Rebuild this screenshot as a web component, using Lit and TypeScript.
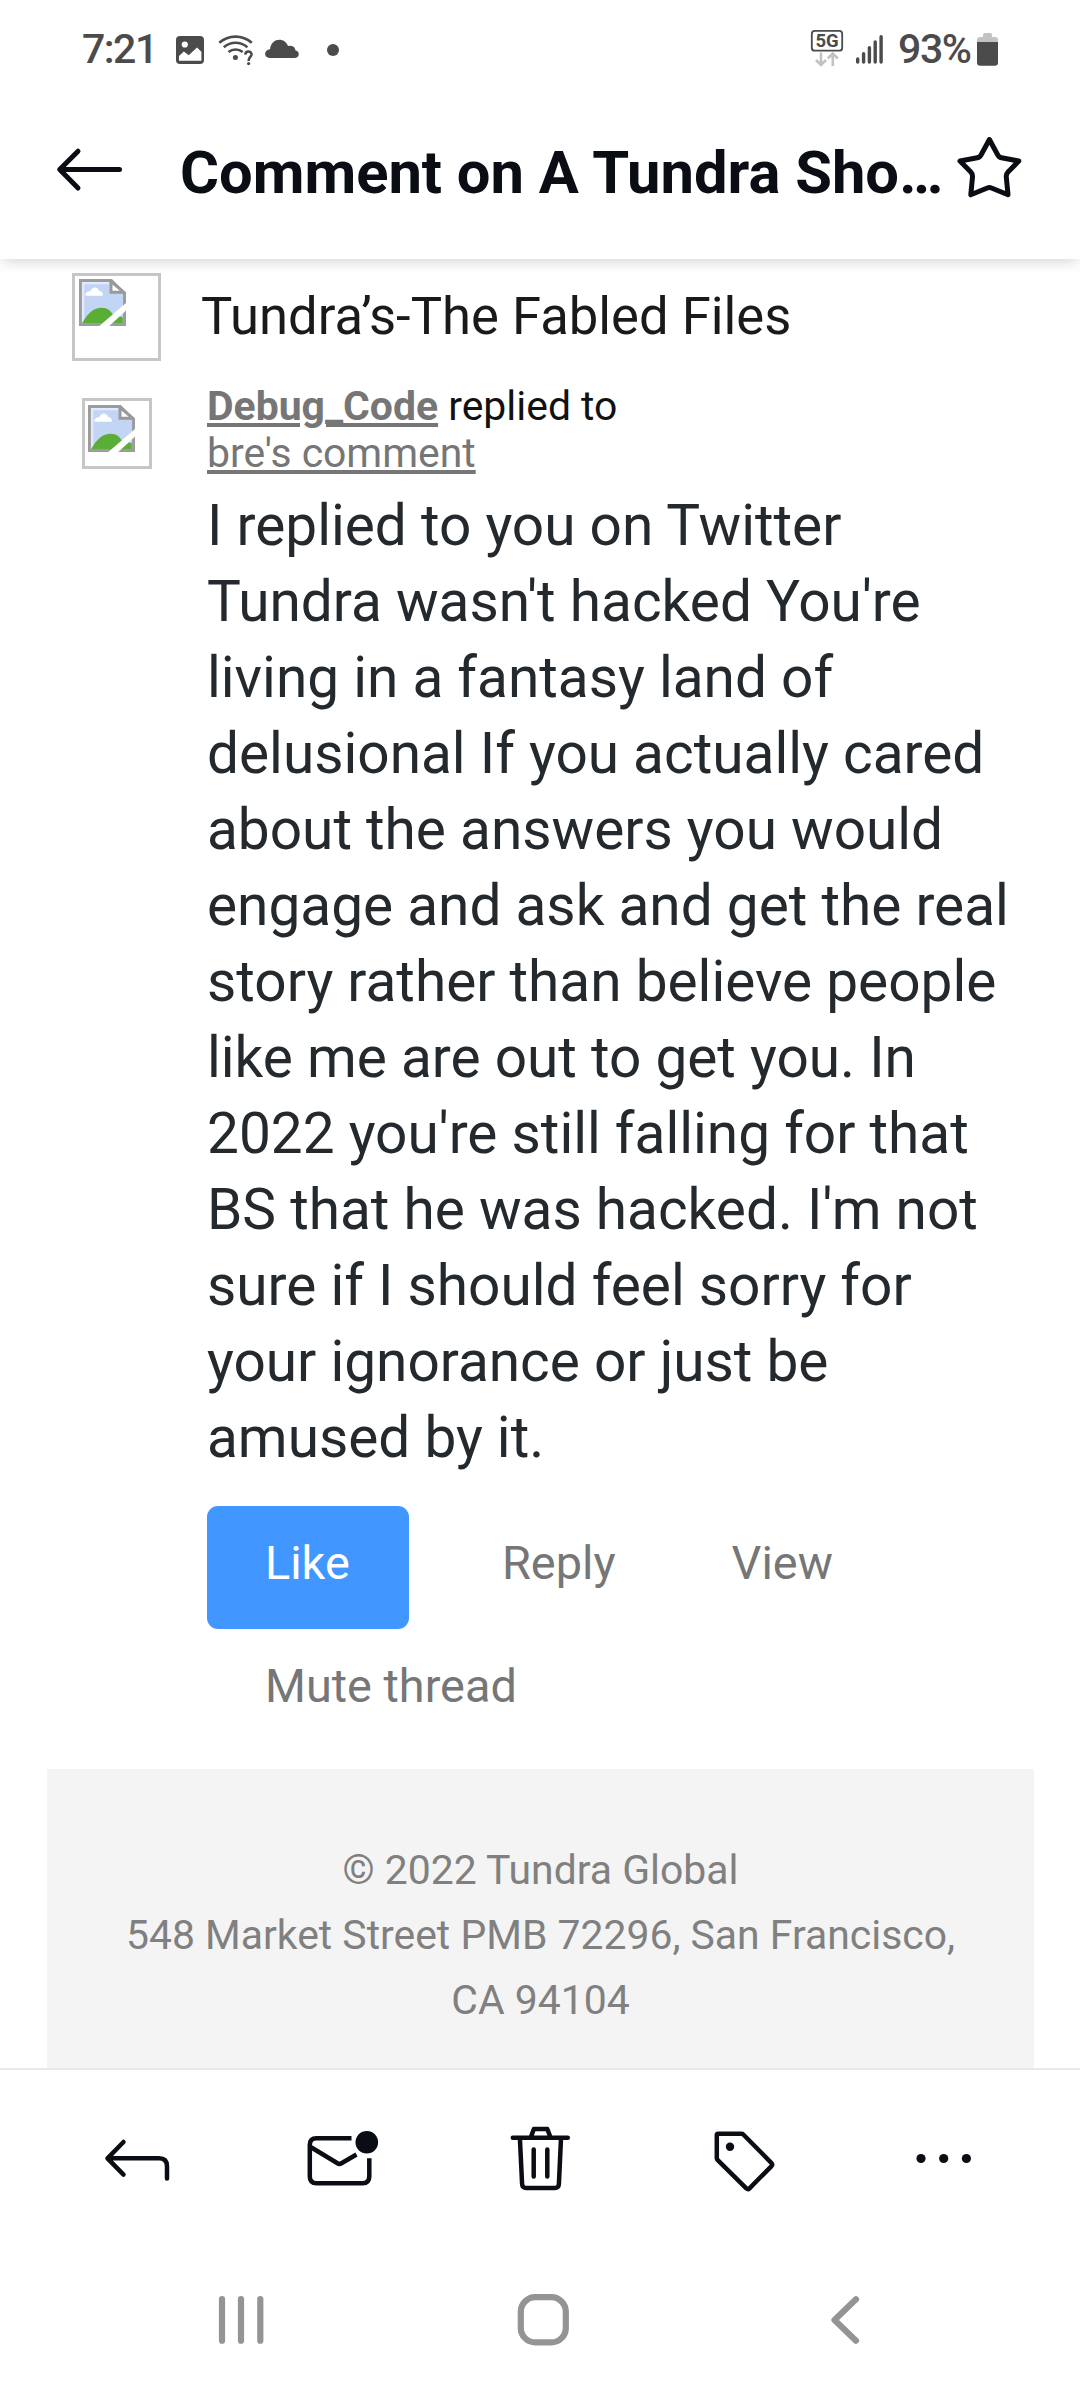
import { LitElement, html, css, svg } from "lit";
import { customElement, property } from "lit/decorators.js";

@customElement("broken-image")
class BrokenImage extends LitElement {
  static styles = css`
    :host { display: block; box-sizing: border-box; border: 3px solid #c6c6c6; flex: none; }
    svg { display: block; width: 47px; height: 47px; }
  `;
  render() {
    return html`<svg viewBox="0 0 16 16">
      <path d="M.5.5H11L15.5 5V15.5H.5Z" fill="#c3d5f5" stroke="#9c9c9c" />
      <path d="M1.4 15V1.4H10.2" fill="none" stroke="#e3ebfb" stroke-width=".8" />
      <path d="M2.2 5.7C2 4.600 3.200 4.100 3.900 4.200 4.300 2.500 6.400 2.400 6.900 4.100 7.900 4.200 8.300 4.900 8 5.700Z" fill="#fff" />
      <path d="M1.100 15C3 11.500 5.200 9.800 7.600 9.800S10.600 10.900 11.500 12L14.900 13V15Z" fill="#5aad35" />
      <path d="M10.900.8V4.500H15.200Z" fill="#fff" stroke="#999" stroke-width="1" />
      <path d="M6.800 16.100L16.100 8.100V10.600L10.200 16.100Z" fill="#fff" />
    </svg>`;
  }
}

@customElement("status-bar")
class StatusBar extends LitElement {
  static styles = css`
    :host { display: flex; align-items: center; height: 98px; padding: 0 80px 0 82px; color: #4b4b4b; background: #fff; font-size: 41px; font-weight: 500; position: relative; z-index: 2; }
    .time { width: 88px; letter-spacing: -1.5px; }
    .level { width: 77px; letter-spacing: -1.4px; }
    .space { flex: 1; }
    svg { display: block; height: 98px; }
    .net { font: 700 18.5px Roboto, sans-serif; }
  `;
  render() {
    return html`
      <span class="time">7:21</span>
      <svg width="180" viewBox="170 0 180 98" fill="#4b4b4b">
        <rect x="176" y="36" width="28" height="28" rx="4" />
        <circle cx="184.8" cy="44.5" r="3.1" fill="#fff" />
        <path d="M179 60.8V56L183.8 51.5 188.7 55.2 197 47.6 201.4 51.8V60.8Z" fill="#fff" />
        <g fill="none" stroke="#4b4b4b" stroke-width="2.6">
          <path d="M219.3 42.8C228.5 34.5 242.5 34.5 251.8 42.8" />
          <path d="M223.8 47.2C230.8 41.3 240.2 41.3 247.4 47.2" />
          <path d="M228.5 52C232.5 48.6 238.5 48.6 242.7 52" />
          <path d="M245.3 54.6C245.6 50.3 251.8 50.7 251.5 54.7 251.2 57.2 248.6 57 248.6 61" />
        </g>
        <circle cx="235.4" cy="57.4" r="2.5" />
        <circle cx="248.6" cy="63.6" r="1.6" />
        <path d="M270 58C263.5 58 263.5 50 270 49.3 271 38 284.5 36.5 288 46 294 44.8 295.5 49 295.5 50.5 300.5 51.5 299.5 58 294.5 58Z" />
        <circle cx="333" cy="50" r="6" />
      </svg>
      <span class="space"></span>
      <svg width="90" viewBox="808 0 90 98" fill="#4b4b4b">
        <rect x="811.8" y="30.9" width="30.4" height="19.8" rx="3" fill="none" stroke="#4b4b4b" stroke-width="1.8" />
        <text class="net" x="827" y="47.4" text-anchor="middle">5G</text>
        <g fill="none" stroke="#c2c2c2" stroke-width="2.6">
          <path d="M821 52.5V64.5M816 60L821 65 826 60" />
          <path d="M832.8 66V54M827.8 58.5L832.8 53.5 837.8 58.5" />
        </g>
        <g stroke="#4b4b4b" stroke-width="3.4" stroke-linecap="round">
          <path d="M857.7 59V62M863.6 53.7V62M869.4 47.7V62M875.2 42V62M881.1 36.7V62" />
        </g>
      </svg>
      <span class="level">93%</span>
      <svg width="25" viewBox="975 0 25 98">
        <path d="M983 37V35Q983 33 985 33H990Q992 33 992 35V37H995Q998 37 998 40V42H977V40Q977 37 980 37Z" fill="#c2c2c2" />
        <path d="M977 42H998V62.5Q998 65.7 994.8 65.7H980.2Q977 65.7 977 62.5Z" fill="#4b4b4b" />
      </svg>
    `;
  }
}

@customElement("title-bar")
class TitleBar extends LitElement {
  @property() heading = "";
  static styles = css`
    :host { display: flex; align-items: center; box-sizing: border-box; height: 161px; padding: 0 50px 12px; background: #fff; position: relative; z-index: 1; box-shadow: 0 6px 12px -3px rgba(0, 0, 0, 0.16); }
    .heading { box-sizing: border-box; width: 820px; padding-left: 50px; font-size: 59.7px; font-weight: 700; color: #0b0d14; white-space: nowrap; }
    svg { display: block; flex: none; height: 149px; fill: none; stroke: #0b0d14; stroke-width: 5; stroke-linecap: round; stroke-linejoin: round; }
  `;
  render() {
    return html`
      <svg width="80" viewBox="50 98 80 149"><path d="M119.5 169.5H60M78 151.2L59.7 169.5 78 188" /></svg>
      <span class="heading">${this.heading}</span>
      <svg width="80" viewBox="950 98 80 149">
        <path d="M989.4 139.5L997.5 154.5Q998.8 157.3 1001.5 157.8L1018.8 161 1008 172Q1006 174 1006.3 177L1008 194.8 991.5 188Q989.4 187 987.3 188L970.8 194.8 972.5 177Q972.8 174 970.800 172L960 161 977.3 157.8Q980 157.3 981.3 154.5Z" />
      </svg>
    `;
  }
}

const toolIcons = [
  svg`<path d="M123.500 2142L107.500 2158.300 123.500 2174.600M108 2158.300H159Q167 2158.300 167 2166.300V2178.500" />`,
  svg`<g transform="translate(1.500 0)">
      <path stroke-linecap="butt" d="M350 2138.300H315Q308.300 2138.300 308.300 2145V2176.600Q308.300 2183.300 315 2183.300H361Q367.800 2183.300 367.800 2176.600V2158.300" />
      <path stroke-linecap="butt" d="M309.500 2147.300L336 2163.300Q338 2164.500 340 2163.300L355 2154.500" />
      <circle class="solid" cx="365.300" cy="2142.300" r="11.300" /></g>`,
  svg`<path transform="translate(2.300 0)" d="M510.500 2137.700H565.500M528.800 2136.500L531.600 2129H545L547.900 2136.500M517.600 2138.500L519.800 2184Q520 2188 524 2188H552.500Q556.400 2188 556.600 2184L558.700 2138.500M531.400 2149.500V2176.600M545 2149.500V2176.600" />`,
  svg`<path d="M718 2133.700H741.500Q742.500 2133.700 743.300 2134.500L771.300 2162.800Q773 2164.500 771.300 2166.300L749.500 2188.300Q748 2189.800 746.300 2188.300L717.500 2159.800Q716.800 2159.300 716.800 2158.300V2135Q716.800 2133.700 718 2133.700Z" />
      <circle class="solid" cx="730" cy="2146.800" r="4.200" />`,
  svg`<g class="solid"><circle cx="921" cy="2158.500" r="4.600" /><circle cx="943.700" cy="2158.500" r="4.600" /><circle cx="966.400" cy="2158.500" r="4.600" /></g>`,
];

const navIcons = [
  svg`<path d="M222 2299V2340.700M241 2299V2340.700M260.300 2299V2340.700" />`,
  svg`<rect x="520.800" y="2297.200" width="45" height="45.200" rx="14.500" />`,
  svg`<path d="M856 2299.300L834.500 2320 856 2340.700" />`,
];

@customElement("bottom-bars")
class BottomBars extends LitElement {
  static styles = css`
    :host { display: block; background: #fff; position: relative; }
    svg { display: block; fill: none; stroke-linecap: round; stroke-linejoin: round; }
    .tools { display: flex; padding: 0 35px; border-top: 2px solid #e9e9e6; }
    .tools svg { width: 202px; height: 160px; stroke: #0b0d14; stroke-width: 4.5; }
    .solid { fill: #0b0d14; stroke: none; }
    .nav { display: flex; padding: 0 90px; }
    .nav svg { width: 300px; height: 170px; stroke: #949494; stroke-width: 6.2; }
  `;
  render() {
    return html`
      <div class="tools">
        ${toolIcons.map((icon, i) => html`<svg viewBox="${35 + 202 * i} 2070 202 160">${icon}</svg>`)}
      </div>
      <div class="nav">
        ${navIcons.map((icon, i) => html`<svg viewBox="${90 + 300 * i} 2230 300 170">${icon}</svg>`)}
      </div>
    `;
  }
}

@customElement("app-root")
class AppRoot extends LitElement {
  static styles = css`
    :host { display: flex; flex-direction: column; width: 1080px; height: 2400px; overflow: hidden; background: #fff; font-family: Roboto, sans-serif; }
    main { height: 1809px; overflow: hidden; box-sizing: border-box; padding-top: 14px; }
    .series { display: flex; align-items: center; height: 88px; padding-left: 72px; gap: 40px; }
    .cover { width: 89px; height: 88px; padding: 3px 4px; }
    .name { font-size: 52.6px; line-height: 60px; color: #1a1a1a; padding-bottom: 3px; }
    .comment { display: flex; gap: 55px; padding: 22px 0 0 82px; }
    .avatar { width: 70px; height: 71px; padding: 4px 3px; margin-top: 15px; }
    .content { width: 818px; }
    .meta { font-size: 40.9px; line-height: 47px; color: #111; }
    .link { color: #767676; text-decoration: underline; text-decoration-thickness: 3.5px; text-underline-offset: 3px; }
    .author { font-weight: 700; }
    .text { margin: 11px 0 0; font-size: 56.75px; line-height: 76px; color: #24292e; }
    .actions { display: flex; flex-wrap: wrap; margin-top: 30px; font-size: 46.85px; color: #767676; }
    .action { box-sizing: border-box; height: 122.6px; line-height: 114px; padding: 0 58px; }
    .like { background: #4197ff; color: #fff; border-radius: 11px; width: 202px; margin-right: 35px; }
    footer { margin: 18px 46px 0 47px; height: 320px; box-sizing: border-box; padding: 69px 70px 0; background: #f4f4f4; color: #808080; text-align: center; font-size: 40.9px; line-height: 65px; }
  `;
  render() {
    return html`
      <status-bar></status-bar>
      <title-bar heading="Comment on A Tundra Sho…"></title-bar>
      <main>
        <div class="series">
          <broken-image class="cover"></broken-image>
          <span class="name">Tundra’s-The Fabled Files</span>
        </div>
        <div class="comment">
          <broken-image class="avatar"></broken-image>
          <div class="content">
            <div class="meta"><span class="link author">Debug_Code</span> replied to<br /><span class="link">bre's comment</span></div>
            <p class="text">I replied to you on Twitter Tundra wasn't hacked You're living in a fantasy land of delusional If you actually cared about the answers you would engage and ask and get the real story rather than believe people like me are out to get you. In 2022 you're still falling for that BS that he was hacked. I'm not sure if I should feel sorry for your ignorance or just be amused by it.</p>
            <div class="actions">
              <span class="action like">Like</span>
              <span class="action">Reply</span>
              <span class="action">View</span>
              <span class="action">Mute thread</span>
            </div>
          </div>
        </div>
        <footer>© 2022 Tundra Global<br />548 Market Street PMB 72296, San Francisco, CA 94104</footer>
      </main>
      <bottom-bars></bottom-bars>
    `;
  }
}
